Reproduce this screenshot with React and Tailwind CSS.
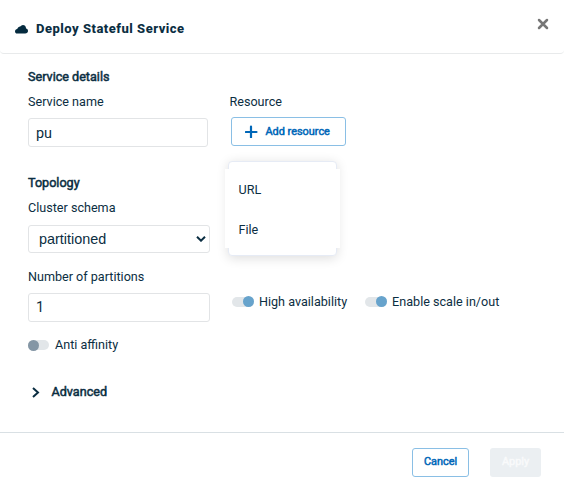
import React from "react";

function Toggle({ on, label }) {
  return (
    <label className="flex h-4 items-center">
      <span className={`flex h-[10px] items-center rounded-full bg-[#e2e6e9] ${on ? "mr-[5px] w-[22px] justify-end" : "mr-[6px] w-[21px] justify-start"}`}>
        <span className={`h-[11px] w-[11px] shrink-0 rounded-full ${on ? "bg-[#67a3cc]" : "bg-[#8496a5]"}`} />
      </span>
      <span className="whitespace-nowrap">{label}</span>
    </label>
  );
}

function Field({ label, children }) {
  return (
    <div>
      <div className="h-4">{label}</div>
      {children}
    </div>
  );
}

function ResourceMenu() {
  return (
    <div className="absolute top-[44px] left-[-6px] h-[94px] w-[115px] pt-[8px]">
      <div className="absolute inset-x-[3px] top-0 -bottom-px rounded-[4px] border border-[#e6ebf5] bg-white shadow-[0_2px_12px_rgba(0,0,0,0.14)]" />
      <div className="relative flex h-[79px] flex-col bg-white">
        <div className="flex h-10 shrink-0 items-center px-[13.5px] pt-[2px]">URL</div>
        <div className="flex h-10 shrink-0 items-center px-[13.5px] pt-[2px]">File</div>
      </div>
    </div>
  );
}

export default function App() {
  return (
    <div className="flex h-[490px] w-[564px] flex-col overflow-hidden bg-white font-['Roboto',sans-serif] text-[12.6px] leading-4 text-[#0b2e42]">
      <header className="flex h-[54px] shrink-0 items-center rounded-b-[4px] border-b border-[#e8eaeb] pt-[4px] pr-[15px] pl-[15px]">
        <svg className="mt-[1px]" width="13" height="9" viewBox="0 0 13 9" fill="#052b3f">
          <path d="M2.200 8.500C.9 8.500 0 7.600 0 6.400 0 5.200 1 4.300 2.200 4.100 2.800 2.600 3.800 1.700 5.200 1.500 6 .5 6.900 0 7.900 0c1.800 0 2.900 1.100 3.100 2.900v.7c1.200.3 2 1.200 2 2.400 0 1.500-1.200 2.500-2.800 2.500Z" />
        </svg>
        <h1 className="ml-2 text-[13px] font-extrabold tracking-[0.5px]">Deploy Stateful Service</h1>
        <svg className="mb-[10px] ml-auto" width="12" height="12" viewBox="0 0 12 12" stroke="#777" strokeWidth="2.5" strokeLinecap="round">
          <path d="M2 2L10 10M10 2L2 10" />
        </svg>
      </header>
      <main className="flex h-[378px] shrink-0 flex-col px-7 pt-[15px]">
        <h2 className="h-4 [-webkit-text-stroke:0.5px_currentColor]">Service details</h2>
        <div className="mt-[9px] flex">
          <div className="w-[180px]">
            <Field label="Service name">
              <div className="mt-2 flex h-[29px] items-center rounded-[3px] border border-[#e2e4e6] px-[7px] pt-[2px] text-[14.4px]">pu</div>
            </Field>
          </div>
          <div className="ml-[21.5px]">
            <Field label="Resource">
              <div className="relative mt-[7px] ml-[1.5px]">
                <button className="flex h-[29px] w-[115px] items-center rounded-[3px] border border-[#8abfe5] pl-[13px] text-[10.9px] text-[#0067b8] [-webkit-text-stroke:0.5px_currentColor]">
                  <svg width="13" height="13" viewBox="0 0 13 13" stroke="currentColor" strokeWidth="2.2" strokeLinecap="round">
                    <path d="M6 1.500V12.500M.8 7H11.500" />
                  </svg>
                  <span className="ml-[7.5px] whitespace-nowrap">Add resource</span>
                </button>
                <ResourceMenu />
              </div>
            </Field>
          </div>
        </div>
        <h2 className="mt-[28px] h-4 [-webkit-text-stroke:0.5px_currentColor]">Topology</h2>
        <div className="mt-[9px] w-[182px]">
          <Field label="Cluster schema">
            <div className="mt-[9px] flex h-[28px] items-center justify-between rounded-[3px] border border-[#e2e4e6] pr-[3px] pl-[10px] font-['Liberation_Sans',sans-serif] text-[14.4px]">
              <span>partitioned</span>
              <svg width="10" height="6" viewBox="0 0 10 6" fill="none" stroke="currentColor" strokeWidth="2">
                <path d="M1 .8L5 4.700L9 .8" />
              </svg>
            </div>
          </Field>
        </div>
        <div className="mt-[16px] flex">
          <div className="w-[182px]">
            <Field label="Number of partitions">
              <div className="mt-2 flex h-[29px] items-center rounded-[3px] border border-[#e2e4e6] px-[7px] pt-px text-[14.4px]">1</div>
            </Field>
          </div>
          <div className="mt-[24.5px] ml-[22px] flex gap-[18px]">
            <Toggle on label="High availability" />
            <Toggle on label="Enable scale in/out" />
          </div>
        </div>
        <div className="mt-[15px]">
          <Toggle label="Anti affinity" />
        </div>
        <div className="mt-[31px] flex h-4 items-center">
          <svg className="ml-[4px]" width="8" height="11" viewBox="0 0 8 11" fill="none" stroke="currentColor" strokeWidth="2">
            <path d="M1 1L6 5.500L1 10" />
          </svg>
          <span className="ml-[11.5px] [-webkit-text-stroke:0.5px_currentColor]">Advanced</span>
        </div>
      </main>
      <footer className="flex h-[58px] shrink-0 items-center justify-end border-t border-[#d9e0e4] pt-[1px] pr-[23px] text-[10.9px]">
        <button className="h-[29px] w-[57px] rounded-[3px] border border-[#8abfe5] pb-px text-[#0067b8] [-webkit-text-stroke:0.5px_currentColor]">Cancel</button>
        <button className="ml-[21px] h-[29px] w-[51px] rounded-[3px] bg-[#ebeff2] pb-px text-[#f9fafb] [-webkit-text-stroke:0.5px_currentColor]">Apply</button>
      </footer>
    </div>
  );
}
